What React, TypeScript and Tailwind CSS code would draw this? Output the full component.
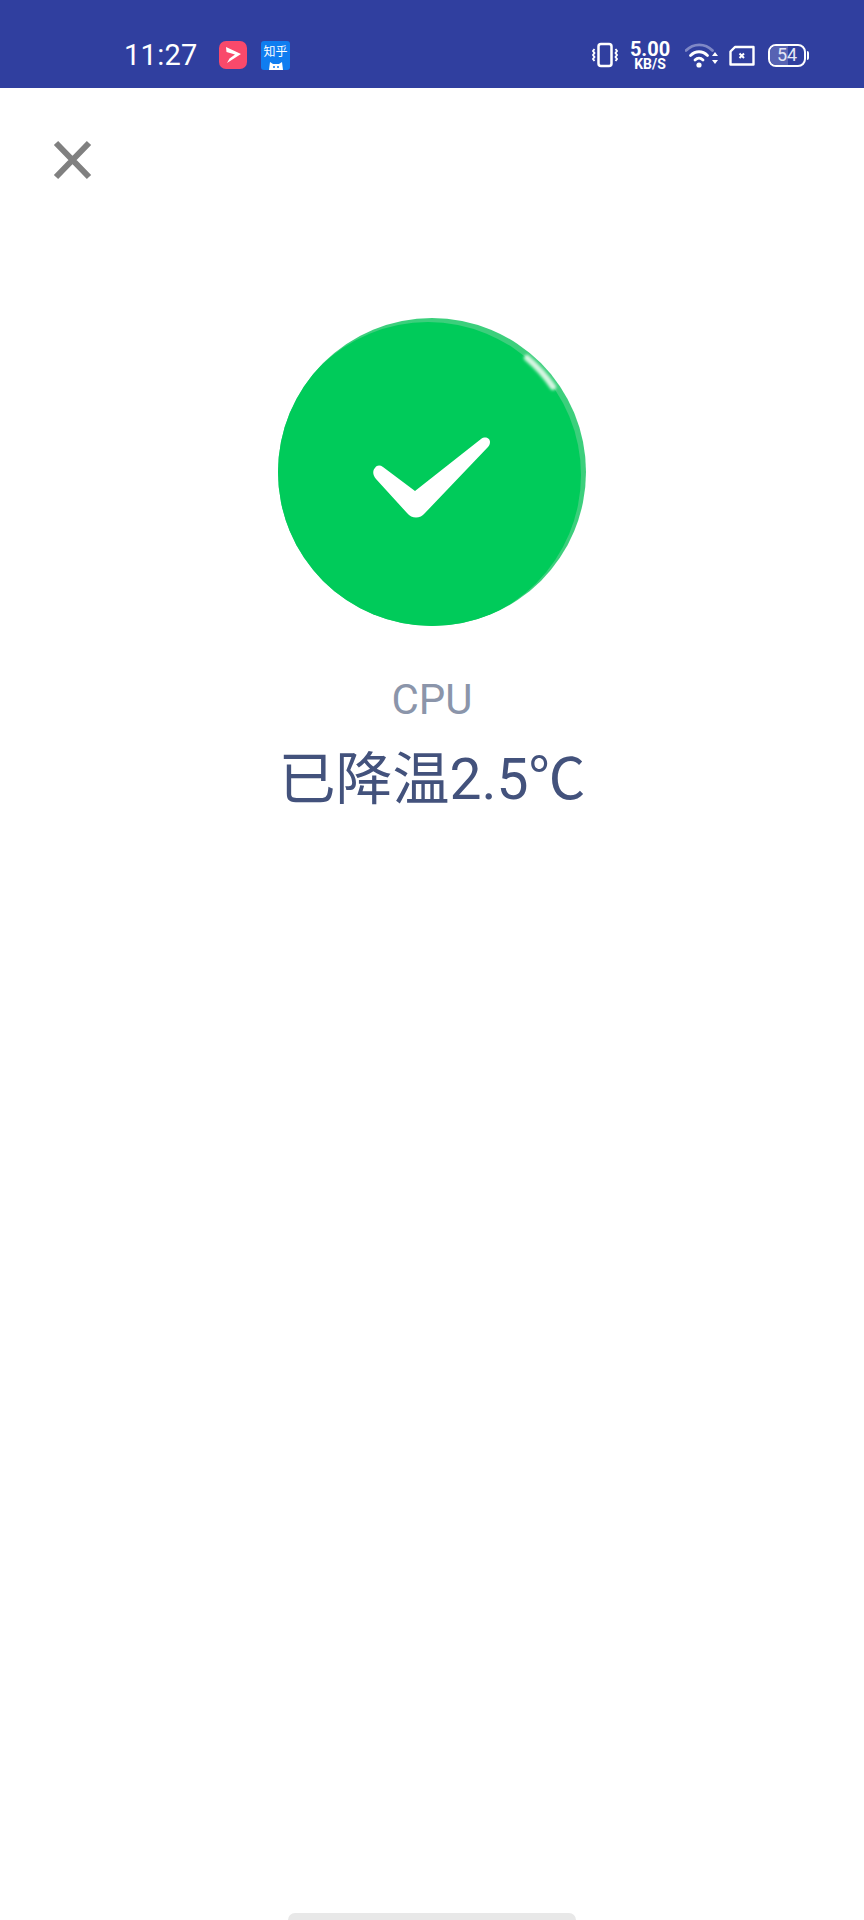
const VibrateIcon = () => (
  <svg width="26" height="26" viewBox="0 0 26 26" fill="none" stroke="white">
    <rect x="6.500" y="2" width="13" height="22" rx="2.500" strokeWidth="2.500" />
    <path d="M2.500 7L1 9l1.500 2L1 13l1.500 2L1 17l1.500 2" strokeWidth="1.800" />
    <path d="M23.500 7L25 9l-1.500 2L25 13l-1.500 2L25 17l-1.500 2" strokeWidth="1.800" />
  </svg>
);

const WifiIcon = () => (
  <svg width="34" height="26" viewBox="0 0 34 26" fill="none">
    <path d="M1 8.500C8.500 1 20 1 27.500 8.500" stroke="#7f88c6" strokeWidth="2.800" strokeLinecap="round" />
    <path d="M5.500 13.500C10.500 8.500 17.500 8.500 22.500 13.500" stroke="white" strokeWidth="2.800" strokeLinecap="round" />
    <path d="M10 18C12.500 15.500 15.500 15.500 18 18" stroke="white" strokeWidth="2.800" strokeLinecap="round" />
    <circle cx="14" cy="23" r="2.600" fill="white" />
    <path d="M27 14l3-4 3 4zM27 18l3 4 3-4z" fill="white" />
  </svg>
);

const SimIcon = () => (
  <svg width="26" height="21" viewBox="0 0 26 21" fill="none" stroke="white">
    <path d="M6 2H24.500V19.500H1.500V6.500Z" strokeWidth="2.400" strokeLinejoin="round" />
    <path d="M10.500 8.500l4.500 4.500M15 8.500l-4.500 4.500" strokeWidth="2" />
  </svg>
);

const BatteryIcon = () => (
  <div className="flex items-center">
    <div className="relative flex h-[23px] w-[38px] items-center justify-center overflow-hidden rounded-[8px] border-2 border-white">
      <div className="absolute inset-y-0 left-0 w-[54%] bg-[#5763b3]" />
      <span className="relative text-[18px] leading-none text-[#e3e6f5]">54</span>
    </div>
    <div className="ml-[1px] h-[9px] w-[2px] rounded-r bg-white" />
  </div>
);

const StatusBar = () => (
  <div className="flex h-[88px] shrink-0 items-center bg-[#303f9f] pt-[22px] text-white">
    <span className="ml-[124px] w-[75px] text-[29px] leading-none tracking-[0.3px]">11:27</span>
    <div className="ml-[20px] flex h-[28px] w-[28px] items-center justify-center rounded-[7px] bg-[#f9496b]">
      <svg width="18" height="18" viewBox="0 0 18 18" fill="white">
        <path d="M2 1L17 8 3 17 5.500 12.500 11 8.500 2.500 6Z" />
      </svg>
    </div>
    <div className="relative ml-[14px] flex h-[29px] w-[29px] flex-col items-center overflow-hidden rounded-[3px] bg-[#0f7df0]">
      <span className="mt-[5px] text-[12px] leading-none text-white">知乎</span>
      <svg className="absolute bottom-0" width="18" height="9" viewBox="0 0 18 9" fill="white">
        <path d="M2 9L3 1 6 3H12L15 1 16 9Z" />
        <circle cx="7" cy="6" r="1" fill="#0f7df0" />
        <circle cx="11" cy="6" r="1" fill="#0f7df0" />
      </svg>
    </div>
    <div className="ml-auto flex items-center pr-[55px]">
      <VibrateIcon />
      <div className="ml-[12px] flex w-[40px] flex-col items-center font-bold">
        <span className="text-[20px] leading-[18px]">5.00</span>
        <span className="text-[14px] leading-[12px]">KB/S</span>
      </div>
      <div className="ml-[15px]">
        <WifiIcon />
      </div>
      <div className="ml-[10px]">
        <SimIcon />
      </div>
      <div className="ml-[13px]">
        <BatteryIcon />
      </div>
    </div>
  </div>
);

const SuccessBadge = () => (
  <div className="relative h-[308px] w-[308px] overflow-hidden rounded-full bg-[#3ccf7c]">
    <div className="absolute left-[-3px] top-[4px] h-[306px] w-[306px] rounded-full bg-[#00cb5a]" />
    <svg className="absolute inset-0" width="308" height="308" viewBox="0 0 308 308" fill="none">
      <defs>
        <filter id="glow" x="-30%" y="-30%" width="160%" height="160%">
          <feGaussianBlur stdDeviation="1.800" />
        </filter>
      </defs>
      <path d="M249 40A148 148 0 0 1 275 69" stroke="#d8f6e3" strokeWidth="6" strokeLinecap="round" filter="url(#glow)" />
      <path
        d="M105 149L137 173L203 121C207 118 212 120 212 124C212 126 211 128 210 129L147 195C142 201 134 201 129 195L98 161C94 156 95 152 97 150C99 147 102 147 105 149Z"
        fill="white"
      />
    </svg>
  </div>
);

export default function App() {
  return (
    <div className="flex h-[1920px] flex-col bg-white font-['Roboto','Noto_Sans_CJK_SC',sans-serif]">
      <StatusBar />

      <button className="ml-[50px] mt-[50px] h-[44px] w-[44px]">
        <svg width="44" height="44" viewBox="0 0 44 44" stroke="#808080" strokeWidth="6">
          <path d="M6 5L39 39M39 5L6 39" />
        </svg>
      </button>

      <div className="mt-[136px] flex flex-col items-center">
        <SuccessBadge />
        <p className="mt-[46px] text-[42px] leading-[56px] text-[#8b95aa]">CPU</p>
        <p className="mt-[16px] text-[57px] leading-[72px] text-[#43527c]">已降温2.5℃</p>
      </div>

      <div className="mx-auto mt-auto h-[7px] w-[288px] rounded-t-full bg-[#e8e8e8]" />
    </div>
  );
}
